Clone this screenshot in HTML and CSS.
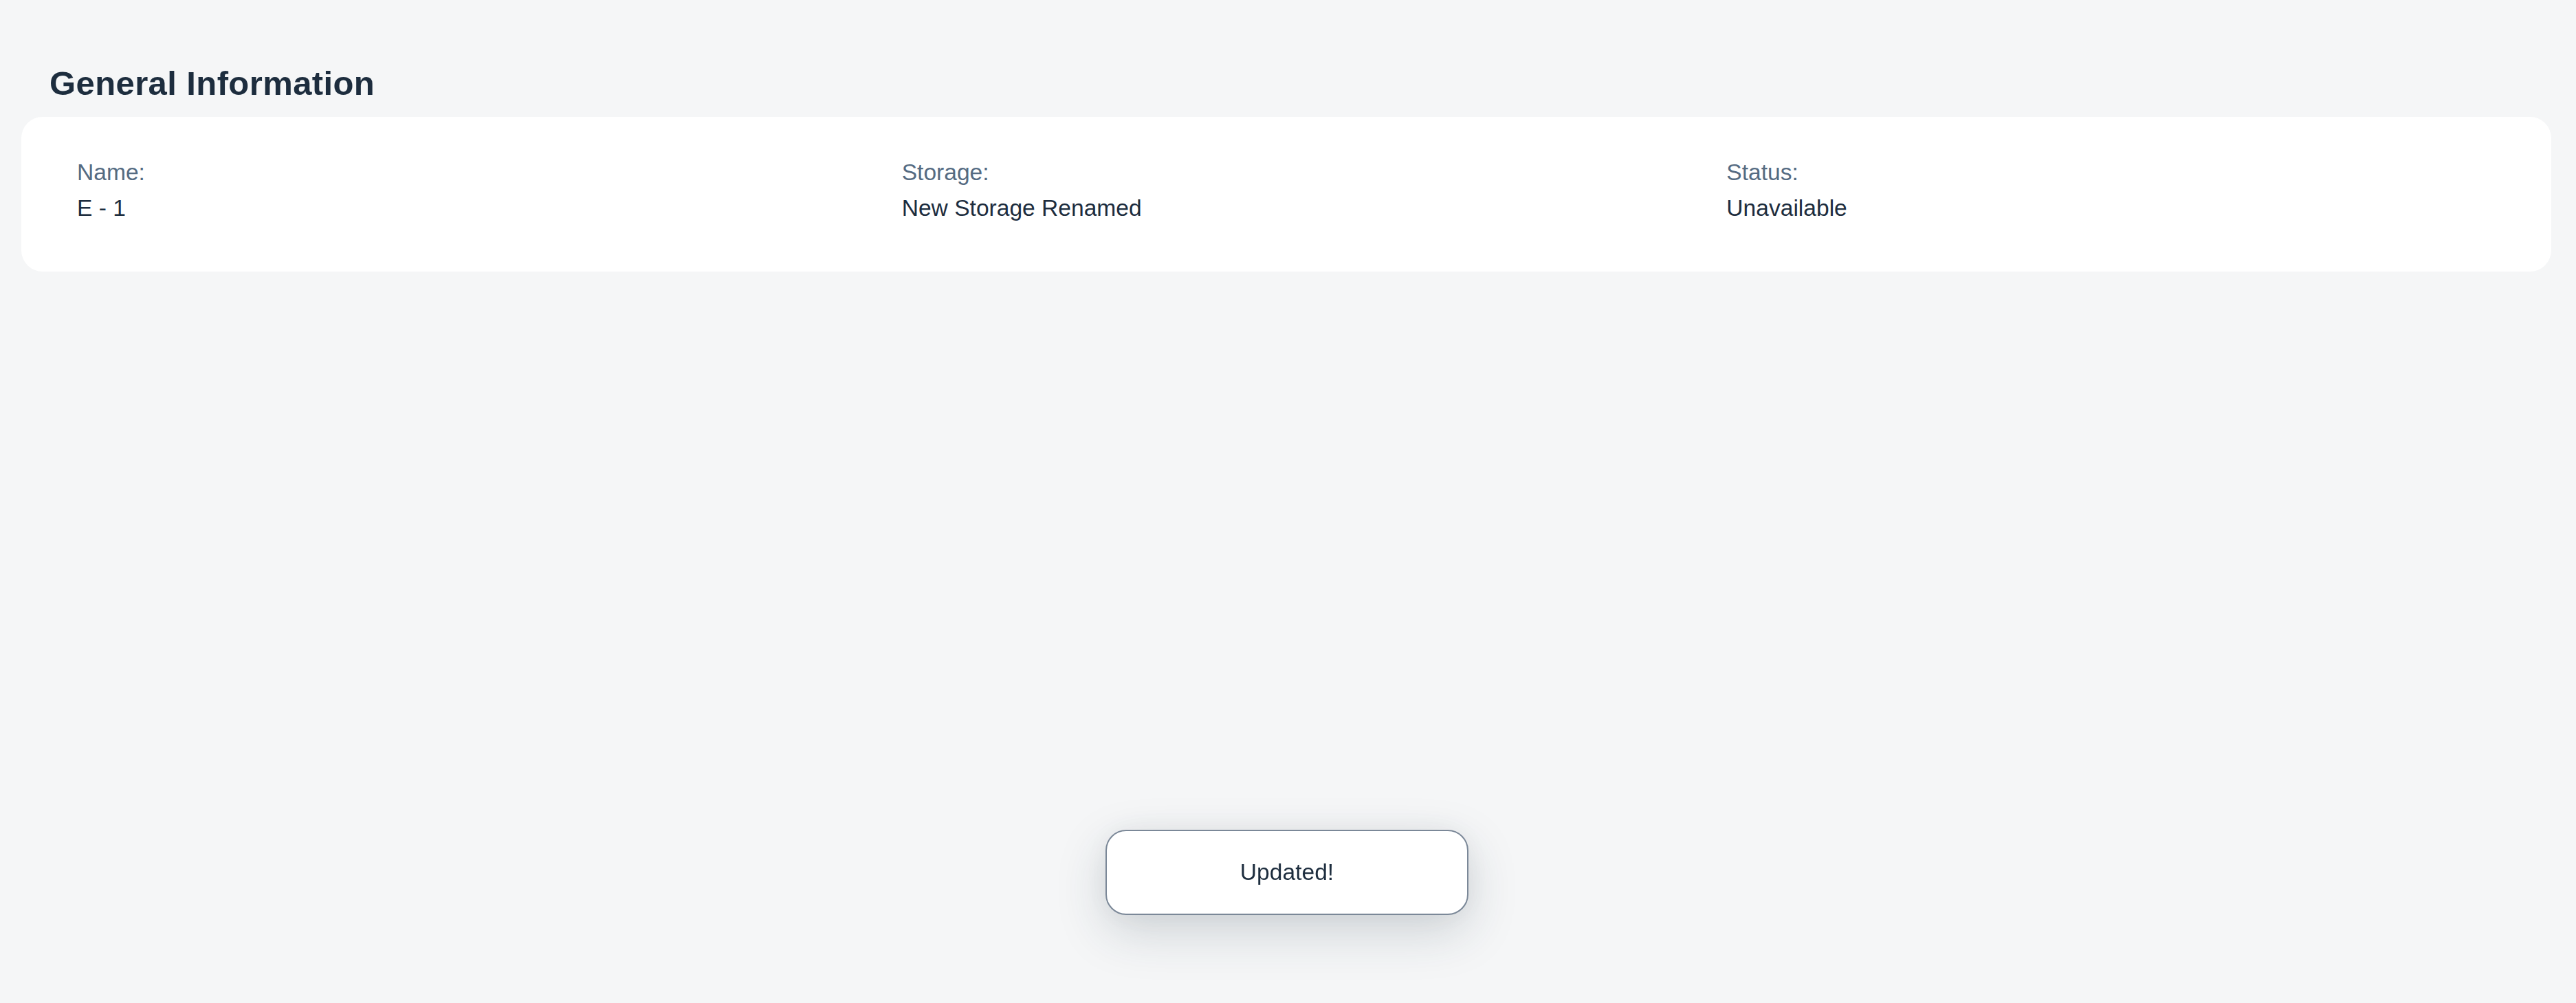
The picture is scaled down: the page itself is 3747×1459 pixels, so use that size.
FILE: index.html
```html
<!DOCTYPE html>
<html lang="en">
<head>
<meta charset="utf-8">
<title>General Information</title>
<link rel="stylesheet" href="styles.css">
</head>
<body>
<main class="page">
  <h2 class="section-title">General Information</h2>
  <section class="card">
    <div class="field">
      <div class="label">Name:</div>
      <div class="value">E - 1</div>
    </div>
    <div class="field">
      <div class="label">Storage:</div>
      <div class="value">New Storage Renamed</div>
    </div>
    <div class="field">
      <div class="label">Status:</div>
      <div class="value">Unavailable</div>
    </div>
  </section>
</main>
<div class="toast">Updated!</div>
</body>
</html>
```

FILE: styles.css
```css
html, body {
  margin: 0;
  padding: 0;
  height: 100%;
}
body {
  background: #f5f6f7;
  font-family: "Liberation Sans", Arial, sans-serif;
  color: #1d2d3e;
}
.page {
  padding: 0 36px 0 31px;
}
.section-title {
  margin: 0;
  padding: 92px 0 0 41px;
  font-size: 49px;
  line-height: 58px;
  letter-spacing: 0.4px;
  font-weight: 700;
  color: #1d2d3e;
}
.card {
  margin-top: 20px;
  background: #ffffff;
  border-radius: 31px;
  padding: 61px 0 72px 81px;
  display: grid;
  grid-template-columns: repeat(3, 1fr);
}
.field {
  display: flex;
  flex-direction: column;
  gap: 12px;
}
.label {
  font-size: 33.6px;
  line-height: 40px;
  color: #556b82;
}
.value {
  font-size: 33.6px;
  line-height: 40px;
  color: #1d2d3e;
}
.toast {
  position: fixed;
  left: 1608px;
  bottom: 128px;
  width: 528px;
  height: 124px;
  box-sizing: border-box;
  border: 2px solid #7b8898;
  border-radius: 30px;
  background: #ffffff;
  display: flex;
  align-items: center;
  justify-content: center;
  font-size: 33.6px;
  color: #1d2d3e;
  box-shadow: 0 24px 72px rgba(34, 53, 72, 0.18), 0 0 48px rgba(34, 53, 72, 0.05);
}
```
